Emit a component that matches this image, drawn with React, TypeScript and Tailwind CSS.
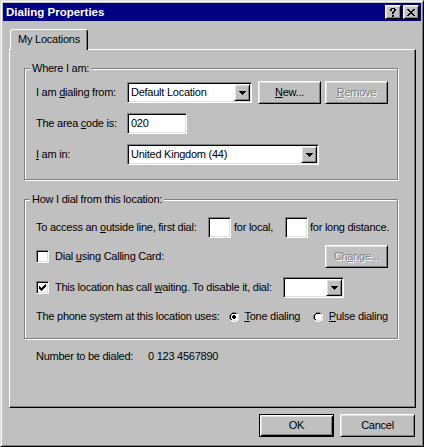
import React from "react";

const raised =
  "border border-t-white border-l-white border-r-black border-b-black shadow-[inset_1px_1px_0_#dfdfdf,inset_-1px_-1px_0_#808080] bg-[#c0c0c0]";
const sunken =
  "border border-t-[#808080] border-l-[#808080] border-r-white border-b-white shadow-[inset_1px_1px_0_#000,inset_-1px_-1px_0_#dfdfdf] bg-white";
const disabledText = "text-[#808080] [text-shadow:1px_1px_0_#fff]";

const COLORS: Record<string, string> = {
  X: "#000",
  K: "#000",
  G: "#808080",
  H: "#ffffff",
  W: "#ffffff",
  L: "#dfdfdf",
};

function Pix({ rows }: { rows: string[] }) {
  const w = rows[0].length;
  const h = rows.length;
  const rects: React.ReactNode[] = [];
  rows.forEach((r, y) =>
    r.split("").forEach((c, x) => {
      if (COLORS[c]) rects.push(<rect key={`${x}-${y}`} x={x} y={y} width={1} height={1} fill={COLORS[c]} />);
    })
  );
  return (
    <svg width={w} height={h} viewBox={`0 0 ${w} ${h}`} shapeRendering="crispEdges" className="block">
      {rects}
    </svg>
  );
}

const ARROW = ["XXXXXXX", ".XXXXX.", "..XXX..", "...X..."];
const CLOSE = ["XX....XX", ".XX..XX.", "..XXXX..", "...XX...", "..XXXX..", ".XX..XX.", "XX....XX"];
const QUESTION = [".XXXX.", "XX..XX", "XX..XX", "...XX.", "..XX..", "..XX..", "......", "..XX..", "..XX.."];
const CHECK = ["......X", ".....XX", "X...XXX", "XX.XXX.", "XXXXX..", ".XXX...", "..X...."];

const RADIO = [
  "....GGGG....",
  "..GGKKKKGG..",
  ".GKKWWWWKKH.",
  ".GKWWWWWWLH.",
  "GKWWWWWWWWLH",
  "GKWWWWWWWWLH",
  "GKWWWWWWWWLH",
  "GKWWWWWWWWLH",
  ".GKWWWWWWLH.",
  ".GLLWWWWLLH.",
  "..HHLLLLHH..",
  "....HHHH....",
];
const RADIO_ON = [
  "....GGGG....",
  "..GGKKKKGG..",
  ".GKKWWWWKKH.",
  ".GKWWWWWWLH.",
  "GKWWWKKWWWLH",
  "GKWWKKKKWWLH",
  "GKWWKKKKWWLH",
  "GKWWWKKWWWLH",
  ".GKWWWWWWLH.",
  ".GLLWWWWLLH.",
  "..HHLLLLHH..",
  "....HHHH....",
];

function Combo({ w, text }: { w: string; text?: string }) {
  return (
    <div className={`${sunken} ${w} h-[21px] flex items-center p-[1px] shrink-0`}>
      <span className="flex-1 pl-[2px] whitespace-nowrap overflow-hidden">{text}</span>
      <div className={`${raised} w-[16px] h-[17px] flex items-center justify-center shrink-0`}>
        <Pix rows={ARROW} />
      </div>
    </div>
  );
}

function Edit({ w, text }: { w: string; text?: string }) {
  return (
    <div className={`${sunken} ${w} h-[21px] flex items-center pl-[3px] shrink-0`}>
      <span>{text}</span>
    </div>
  );
}

function Button({ children, w, disabled }: { children: React.ReactNode; w: string; disabled?: boolean }) {
  return (
    <div
      className={`${raised} ${w} h-[23px] flex items-center justify-center shrink-0 ${disabled ? disabledText : ""}`}
    >
      <span>{children}</span>
    </div>
  );
}

function Checkbox({ checked }: { checked?: boolean }) {
  return (
    <div className={`${sunken} w-[13px] h-[13px] flex items-center justify-center shrink-0`}>
      {checked ? <Pix rows={CHECK} /> : null}
    </div>
  );
}

function TitleBtn({ children, extra }: { children: React.ReactNode; extra?: string }) {
  return (
    <div className={`${raised} w-[16px] h-[14px] flex items-center justify-center ${extra ?? ""}`}>{children}</div>
  );
}

export default function App() {
  return (
    <div className="w-[424px] h-[447px] bg-[#c0c0c0] border border-t-[#dfdfdf] border-l-[#dfdfdf] border-r-black border-b-black shadow-[inset_1px_1px_0_#fff,inset_-1px_-1px_0_#808080] p-[2px] flex flex-col font-[Liberation_Sans,Arial,sans-serif] text-[11px] tracking-[-0.25px] leading-[13px] text-black select-none">
      {/* Title bar */}
      <div className="h-[18px] bg-[#000080] flex items-center pl-[3px] pr-[2px] shrink-0">
        <span className="flex-1 text-white font-bold text-[11.5px] tracking-normal">Dialing Properties</span>
        <TitleBtn>
          <Pix rows={QUESTION} />
        </TitleBtn>
        <TitleBtn extra="ml-[2px]">
          <Pix rows={CLOSE} />
        </TitleBtn>
      </div>

      {/* Body */}
      <div className="flex-1 flex flex-col pt-[8px] pl-[6px] pr-[5px] pb-[7px]">
        <div className="flex">
          <div className="relative z-10 -mb-[1px] ml-[1px] h-[21px] w-[78px] bg-[#c0c0c0] border-t border-l border-r border-t-white border-l-white border-r-black shadow-[inset_-1px_0_0_#808080] rounded-t-[3px] flex items-center justify-center pb-[1px]">
            My Locations
          </div>
        </div>

        <div className="flex-1 flex flex-col border border-t-white border-l-white border-r-black border-b-black shadow-[inset_-1px_-1px_0_#808080] pl-[14px] pr-[17px]">
          {/* Where I am */}
          <fieldset className="mt-[12px] border border-[#808080] shadow-[inset_1px_1px_0_#fff,1px_1px_0_#fff] p-0 m-0 min-w-0">
            <legend className="ml-[5px] px-[2px] leading-[13px] bg-[#c0c0c0]">Where I am:</legend>
            <div className="flex flex-col pt-[6px] pb-[13px] pl-[11px] pr-[9px]">
              <div className="h-[23px] flex items-center">
                <span className="w-[91px] shrink-0">
                  I am <u>d</u>ialing from:
                </span>
                <Combo w="w-[125px]" text="Default Location" />
                <div className="ml-[6px]">
                  <Button w="w-[63px]">
                    <u>N</u>ew...
                  </Button>
                </div>
                <div className="ml-[4px]">
                  <Button w="w-[63px]" disabled>
                    <u>R</u>emove
                  </Button>
                </div>
              </div>
              <div className="h-[23px] mt-[8px] flex items-center">
                <span className="w-[91px] shrink-0">
                  The area <u>c</u>ode is:
                </span>
                <Edit w="w-[60px]" text="020" />
              </div>
              <div className="h-[23px] mt-[8px] flex items-center">
                <span className="w-[91px] shrink-0">
                  <u>I</u> am in:
                </span>
                <Combo w="w-[192px]" text="United Kingdom (44)" />
              </div>
            </div>
          </fieldset>

          {/* How I dial */}
          <fieldset className="mt-[13px] border border-[#808080] shadow-[inset_1px_1px_0_#fff,1px_1px_0_#fff] p-0 m-0 min-w-0">
            <legend className="ml-[5px] px-[2px] leading-[13px] bg-[#c0c0c0]">How I dial from this location:</legend>
            <div className="flex flex-col pt-[10px] pb-[10px] pl-[11px] pr-[9px]">
              <div className="h-[23px] flex items-center">
                <span className="w-[172px] shrink-0 whitespace-nowrap">
                  To access an <u>o</u>utside line, first dial:
                </span>
                <Edit w="w-[23px]" />
                <span className="ml-[3px] w-[51px] shrink-0 whitespace-nowrap">for local,</span>
                <Edit w="w-[23px]" />
                <span className="ml-[2px] whitespace-nowrap">for long distance.</span>
              </div>
              <div className="h-[23px] mt-[6px] flex items-center justify-between">
                <div className="flex items-center">
                  <Checkbox />
                  <span className="ml-[6px]">
                    Dial <u>u</u>sing Calling Card:
                  </span>
                </div>
                <Button w="w-[63px]" disabled>
                  Ch<u>a</u>nge...
                </Button>
              </div>
              <div className="h-[23px] mt-[8px] flex items-center">
                <Checkbox checked />
                <span className="ml-[6px] w-[228px] shrink-0 whitespace-nowrap">
                  This location has call <u>w</u>aiting. To disable it, dial:
                </span>
                <Combo w="w-[61px]" />
              </div>
              <div className="h-[23px] mt-[6px] flex items-center">
                <span className="w-[193px] shrink-0 whitespace-nowrap">The phone system at this location uses:</span>
                <Pix rows={RADIO_ON} />
                <span className="ml-[5px] w-[69px] shrink-0 whitespace-nowrap">
                  <u>T</u>one dialing
                </span>
                <Pix rows={RADIO} />
                <span className="ml-[5px] whitespace-nowrap">
                  <u>P</u>ulse dialing
                </span>
              </div>
            </div>
          </fieldset>

          <div className="mt-[11px] h-[13px] flex items-center pl-[12px]">
            <span className="w-[112px] shrink-0">Number to be dialed:</span>
            <span>0 123 4567890</span>
          </div>
        </div>

        <div className="mt-[6px] mr-[1px] flex justify-end gap-[6px]">
          <div className="w-[75px] h-[23px] border border-black shadow-[inset_1px_1px_0_#fff,inset_-1px_-1px_0_#000,inset_2px_2px_0_#dfdfdf,inset_-2px_-2px_0_#808080] bg-[#c0c0c0] flex items-center justify-center">
            OK
          </div>
          <Button w="w-[75px]">Cancel</Button>
        </div>
      </div>
    </div>
  );
}
